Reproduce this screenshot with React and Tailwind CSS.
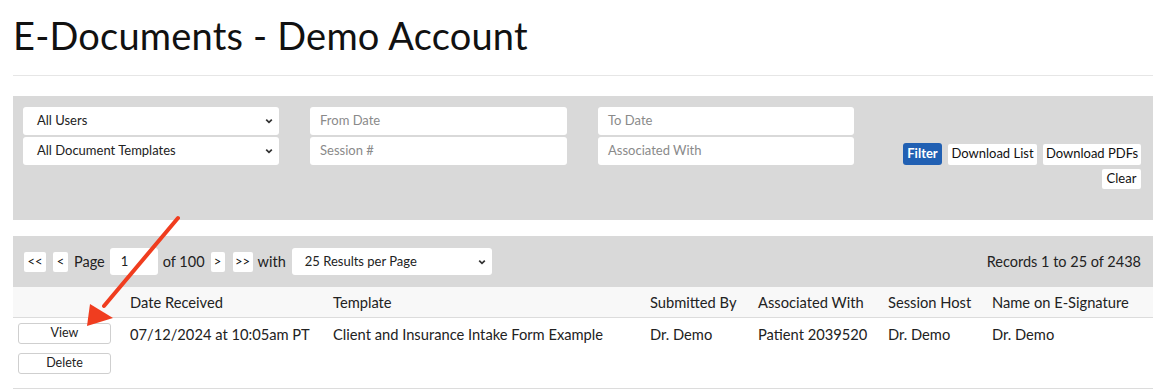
import React from "react";

const Chevron = () => (
  <svg width="10" height="10" viewBox="0 0 10 10" className="absolute right-[5px] top-1/2 -translate-y-1/2">
    <path d="M2.2 3.6 L5 6.4 L7.8 3.6" fill="none" stroke="#333" strokeWidth="1.7" />
  </svg>
);

function SelectBox({ label, className }) {
  return (
    <div className={"relative bg-white rounded-[3px] h-[28px] flex items-center pl-[14px] text-[13px] text-[#222] " + className}>
      {label}
      <Chevron />
    </div>
  );
}

function InputBox({ label, className }) {
  return (
    <div className={"bg-white rounded-[3px] h-[28px] flex items-center pl-[10px] text-[13px] text-[#8a8a8a] " + className}>
      {label}
    </div>
  );
}

function SmallBtn({ children, className }) {
  return (
    <div className={"bg-white rounded-[2px] h-[20px] flex items-center justify-center text-[13px] text-[#111] " + className}>
      {children}
    </div>
  );
}

export default function App() {
  const font = { fontFamily: "Lato, 'Noto Sans', sans-serif" };
  return (
    <div className="relative w-[1166px] h-[389px] bg-white overflow-hidden" style={font}>
      <div className="px-[13px]">
        <h1 className="text-[38px] leading-[38px] pt-[16px] text-[#111] tracking-[0.2px]">E-Documents - Demo Account</h1>
        <div className="mt-[21px] h-px bg-[#e6e6e6]" />
        <div className="mt-[20px] h-[124px] bg-[#d9d9d9] flex pl-[10px] pr-[12px] pt-[11px]">
          <div className="flex flex-col gap-[2px] w-[256px]">
            <SelectBox label="All Users" />
            <SelectBox label="All Document Templates" />
          </div>
          <div className="flex flex-col gap-[2px] w-[257px] ml-[31px]">
            <InputBox label="From Date" />
            <InputBox label="Session #" />
          </div>
          <div className="flex flex-col gap-[2px] w-[256px] ml-[31px]">
            <InputBox label="To Date" />
            <InputBox label="Associated With" />
          </div>
          <div className="flex-1 flex flex-col items-end pt-[36px] gap-[4px]">
            <div className="flex gap-[6px] items-center">
              <div className="bg-[#2160b3] rounded-[3px] h-[22px] w-[39px] flex items-center justify-center text-[13px] text-white font-bold">Filter</div>
              <SmallBtn className="w-[89px] h-[21px]">Download List</SmallBtn>
              <SmallBtn className="w-[98px] h-[21px]">Download PDFs</SmallBtn>
            </div>
            <SmallBtn className="w-[39px]">Clear</SmallBtn>
          </div>
        </div>

        <div className="mt-[16px] h-[51px] bg-[#d9d9d9] flex items-center pl-[11px] pr-[12px] text-[14.5px] text-[#222]">
          <SmallBtn className="w-[22px] text-[12px] h-[19px]">&lt;&lt;</SmallBtn>
          <SmallBtn className="w-[15px] ml-[7px] text-[12px] h-[19px]">&lt;</SmallBtn>
          <span className="ml-[6px]">Page</span>
          <div className="ml-[5px] bg-white rounded-[3px] h-[27px] w-[48px] flex items-center pl-[11px] text-[13px]">1</div>
          <span className="ml-[5px]">of 100</span>
          <SmallBtn className="w-[14px] ml-[6px] text-[12px] h-[19px]">&gt;</SmallBtn>
          <SmallBtn className="w-[20px] ml-[8px] text-[12px] h-[19px]">&gt;&gt;</SmallBtn>
          <span className="ml-[5px]">with</span>
          <div className="relative ml-[6px] bg-white rounded-[3px] h-[27px] w-[200px] flex items-center pl-[13px] text-[13px]">
            25 Results per Page
            <Chevron />
          </div>
          <span className="ml-auto">Records 1 to 25 of 2438</span>
        </div>

        <div className="grid grid-cols-[117px_203px_317px_108px_130px_104px_1fr] h-[31px] bg-[#f8f8f8] border-b border-[#dcdcdc] items-center text-[14.7px] text-[#222]">
          <div />
          <div>Date Received</div>
          <div>Template</div>
          <div>Submitted By</div>
          <div>Associated With</div>
          <div>Session Host</div>
          <div>Name on E-Signature</div>
        </div>
        <div className="grid grid-cols-[117px_203px_317px_108px_130px_104px_1fr] h-[71px] border-b border-[#dcdcdc] text-[14.7px] text-[#222]">
          <div className="pl-[5px] pt-[5px] flex flex-col gap-[9px]">
            <div className="w-[93px] h-[21px] border border-[#cfcfcf] rounded-[3px] flex items-center justify-center text-[12.5px]">View</div>
            <div className="w-[93px] h-[21px] border border-[#cfcfcf] rounded-[3px] flex items-center justify-center text-[12.5px]">Delete</div>
          </div>
          <div className="pt-[5px]">07/12/2024 at 10:05am PT</div>
          <div className="pt-[5px]">Client and Insurance Intake Form Example</div>
          <div className="pt-[5px]">Dr. Demo</div>
          <div className="pt-[5px]">Patient 2039520</div>
          <div className="pt-[5px]">Dr. Demo</div>
          <div className="pt-[5px]">Dr. Demo</div>
        </div>
      </div>

      <svg className="absolute left-0 top-0 pointer-events-none" width="1166" height="389" viewBox="0 0 1166 389">
        <line x1="178" y1="218" x2="104" y2="306" stroke="#f03d1f" strokeWidth="4" strokeLinecap="round" />
        <polygon points="87,326 90,304 113,318" fill="#f03d1f" />
      </svg>
    </div>
  );
}
